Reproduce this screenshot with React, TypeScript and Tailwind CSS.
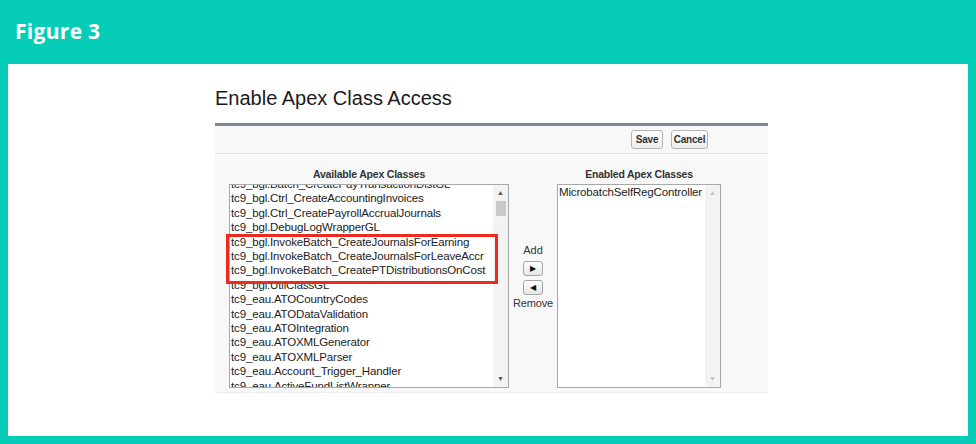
const available = [
  'tc9_bgl.Batch_CreatePayTransactionDistGL',
  'tc9_bgl.Ctrl_CreateAccountingInvoices',
  'tc9_bgl.Ctrl_CreatePayrollAccrualJournals',
  'tc9_bgl.DebugLogWrapperGL',
  'tc9_bgl.InvokeBatch_CreateJournalsForEarning',
  'tc9_bgl.InvokeBatch_CreateJournalsForLeaveAccr',
  'tc9_bgl.InvokeBatch_CreatePTDistributionsOnCost',
  'tc9_bgl.UtilClassGL',
  'tc9_eau.ATOCountryCodes',
  'tc9_eau.ATODataValidation',
  'tc9_eau.ATOIntegration',
  'tc9_eau.ATOXMLGenerator',
  'tc9_eau.ATOXMLParser',
  'tc9_eau.Account_Trigger_Handler',
  'tc9_eau.ActiveFundListWrapper',
]

const sf = { fontFamily: '"Liberation Sans", Arial, sans-serif' }

function Scrollbar({ disabled }: { disabled?: boolean }) {
  const arrow = disabled ? 'text-[#c4c4c4]' : 'text-[#555]'
  return (
    <div className="w-[15px] flex flex-col items-center bg-[#f3f3f3]">
      <span className={`text-[7px] leading-[14px] mt-[1px] ${arrow}`}>▲</span>
      {!disabled && <div className="w-[10px] h-[15px] bg-[#c9c9c9] mt-[1px]" />}
      <div className="flex-1" />
      <span className={`text-[7px] leading-[14px] mb-[1px] ${arrow}`}>▼</span>
    </div>
  )
}

function SmallButton({ label, w }: { label: string; w: string }) {
  return (
    <button className={`${w} h-[19px] border border-[#b5b5b5] rounded-[3px] bg-gradient-to-b from-white to-[#ececec] text-[10px] font-bold text-[#333] leading-none tracking-[-0.2px]`}>
      {label}
    </button>
  )
}

function ArrowButton({ dir }: { dir: 'left' | 'right' }) {
  return (
    <div className="w-[20px] h-[15px] border border-[#a5a5a5] rounded-[3px] bg-gradient-to-b from-white to-[#e6e6e6] flex items-center justify-center">
      <span className="text-[8px] text-[#111] leading-none">{dir === 'right' ? '▶' : '◀'}</span>
    </div>
  )
}

export default function App() {
  return (
    <div className="w-[976px] h-[444px] bg-[#06cdb8] flex flex-col px-[8px] pb-[8px]">
      <div className="h-[64px] flex items-center pl-[7px]">
        <h1 className="text-white text-[21px] font-bold tracking-[0.3px]" style={{ fontFamily: '"Open Sans", sans-serif' }}>Figure 3</h1>
      </div>
      <div className="flex-1 bg-white pl-[207px] pt-[22px]" style={sf}>
        <h2 className="text-[20px] leading-[24px] text-[#1b1b1b] mb-[13px]">Enable Apex Class Access</h2>
        <div className="w-[553px] border-t-[3px] border-[#7f879a] bg-[#f8f8f8] border-b border-b-[#ededed]">
          <div className="h-[28px] flex items-center justify-end gap-[8px] pr-[60px] border-b border-[#e3e3e3]">
            <SmallButton label="Save" w="w-[32px]" />
            <SmallButton label="Cancel" w="w-[37px]" />
          </div>
          <div className="flex pl-[14px] pt-[13px] pb-[4px]">
            <div className="w-[280px] flex flex-col">
              <div className="text-[10.5px] font-bold text-[#333] leading-[14px] text-center mb-[3px] tracking-[-0.2px]">Available Apex Classes</div>
              <div className="relative h-[204px] border border-[#a8a8a8] bg-white flex">
                <div className="flex-1 overflow-hidden">
                  <div className="mt-[-8px] pl-[1px]">
                    {available.map((c) => (
                      <div key={c} className="text-[11.5px] leading-[14.4px] text-[#222] whitespace-nowrap tracking-[-0.15px]">{c}</div>
                    ))}
                  </div>
                </div>
                <Scrollbar />
                <div className="absolute left-[-4px] top-[49px] w-[272px] h-[50px] border-[3px] border-[#ec2a1d]" />
              </div>
            </div>
            <div className="w-[48px] flex flex-col items-center pt-[77px] gap-[4px]">
              <div className="text-[11px] text-[#333] leading-[13px]">Add</div>
              <ArrowButton dir="right" />
              <ArrowButton dir="left" />
              <div className="text-[11px] text-[#333] leading-[13px] mt-[-2px] tracking-[-0.2px]">Remove</div>
            </div>
            <div className="w-[164px] flex flex-col">
              <div className="text-[10.5px] font-bold text-[#333] leading-[14px] text-center mb-[3px] tracking-[-0.2px]">Enabled Apex Classes</div>
              <div className="h-[204px] border border-[#a8a8a8] bg-white flex">
                <div className="flex-1 overflow-hidden pl-[1px]">
                  <div className="text-[11.5px] leading-[15px] text-[#222] whitespace-nowrap tracking-[-0.15px]">MicrobatchSelfRegController</div>
                </div>
                <Scrollbar disabled />
              </div>
            </div>
          </div>
        </div>
      </div>
    </div>
  )
}
